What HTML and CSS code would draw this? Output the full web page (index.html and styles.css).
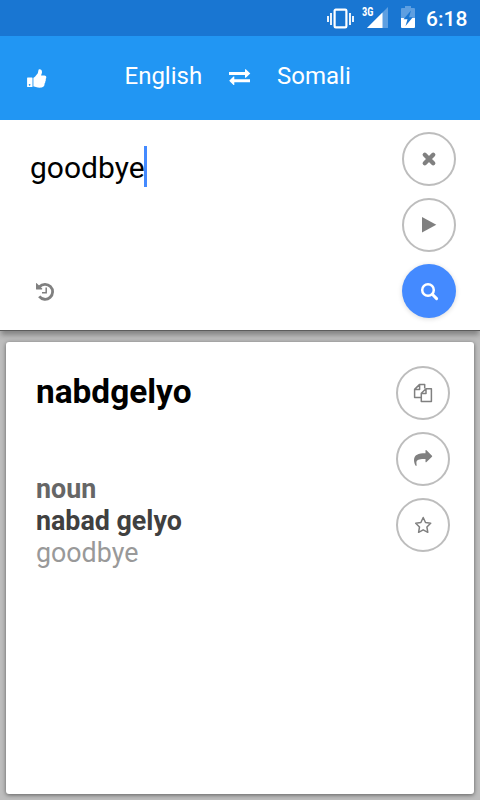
FILE: index.html
```html
<!DOCTYPE html>
<html lang="en">
<head>
    <meta charset="UTF-8">
    <title>Translator</title>
    <link rel="stylesheet" href="styles.css">
</head>
<body>
    <div class="status-bar">
        <svg class="vibrate" width="27" height="21" viewBox="0 0 27 21">
            <path d="M1 8v6M4 5v12M23 5v12M26 8v6" stroke="#fff" stroke-width="1.8"/>
            <rect x="7.6" y="1.6" width="11.8" height="17.8" rx="1.2" fill="none" stroke="#fff" stroke-width="2.2"/>
        </svg>
        <div class="signal">
            <span>3G</span>
            <svg width="21" height="21" viewBox="0 0 21 21">
                <path d="M21 0v21H0z" fill="#5e9fe1"/>
                <path d="M15.5 5.5V21H0z" fill="#fff"/>
            </svg>
        </div>
        <svg class="battery" width="14" height="22" viewBox="0 0 14 22">
            <path d="M0 3q0-1 1-1h3V0h6v2h3q1 0 1 1v9H0z" fill="#5e9fe1"/>
            <path d="M0 12h14v9q0 1-1 1H1q-1 0-1-1z" fill="#fff"/>
            <path d="M10 4.500L2.500 13.200h4L4.500 20l7.300-8.800H8z" fill="#1976d2"/>
        </svg>
        <span class="clock">6:18</span>
    </div>

    <div class="header">
        <svg class="thumb" width="20" height="20" viewBox="0 0 20 20">
            <path fill="#fff" fill-rule="evenodd" d="M.6 8.500H5q.5 0 .5.5v8.600q0 .5-.5.500H.6q-.5 0-.5-.5V9q0-.5.5-.5zM2.600 15a.8.8 0 1 0 .01 0z"/>
            <path fill="#fff" d="M6.400 9q0-.5.5-.6C8 8 8.800 6.600 10 5.200c1.200-1.300 1-2.200 1.400-3.800.2-.8.500-1.100 1.200-1.100 1.600 0 2.400 1.200 2.400 2.700 0 1.400-.6 2.300-.9 3.400h3.400c1 0 1.800.8 1.800 1.800 0 .7-.2 1.300-.6 1.700.3 1 .1 1.800-.4 2.500.1 1-.2 1.800-.8 2.400.2 1.400-.4 3.200-2.700 3.700-2 .3-4.200.1-6-.6l-1.700-.5q-.7 0-.7-.5z"/>
        </svg>
        <span class="lang from">English</span>
        <svg class="swap" width="22" height="16" viewBox="0 0 22 16">
            <path fill="#fff" d="M0 3h16V.2h.8L21.300 4.600 16.800 8.800H16V6H0zM21 10.200v3H5.300V16h-.8L.2 11.700 4.500 7.400h.8v2.800z"/>
        </svg>
        <span class="lang">Somali</span>
    </div>

    <div class="input-area">
        <div class="text-column">
            <div class="query">goodbye<i class="caret"></i></div>
            <svg class="history" width="19" height="19" viewBox="0 0 19 19">
                <path d="M3.500 4.800A7.500 7.500 0 1 1 3.200 14.400" fill="none" stroke="#808080" stroke-width="2.800"/>
                <path d="M0 1.300q.3-.4.7 0L6.200 6.600q.4.900-.5.900H.6q-.6 0-.6-.6z" fill="#808080"/>
                <path d="M10.200 5.500v5.300H6" fill="none" stroke="#808080" stroke-width="1.500"/>
            </svg>
        </div>
        <div class="buttons">
            <div class="round">
                <svg width="20" height="20" viewBox="0 0 20 20">
                    <path d="M5.800 5.800l8.400 8.400M14.200 5.800l-8.400 8.400" stroke="#808080" stroke-width="4.400" stroke-linecap="round"/>
                </svg>
            </div>
            <div class="round">
                <svg width="20" height="20" viewBox="0 0 20 20">
                    <path d="M3 2L17.300 9.800 3 17.600z" fill="#808080"/>
                </svg>
            </div>
            <div class="round search">
                <svg width="20" height="20" viewBox="0 0 20 20">
                    <circle cx="9" cy="9" r="5.800" fill="none" stroke="#fff" stroke-width="2.500"/>
                    <path d="M13.300 13.300l4.300 4.300" stroke="#fff" stroke-width="3" stroke-linecap="round"/>
                </svg>
            </div>
        </div>
    </div>

    <div class="result-area">
        <div class="card">
            <div class="result-text">
                <h1>nabdgelyo</h1>
                <div class="entry">
                    <div class="pos">noun</div>
                    <div class="term">nabad gelyo</div>
                    <div class="meaning">goodbye</div>
                </div>
            </div>
            <div class="buttons">
                <div class="round">
                    <svg width="20" height="20" viewBox="0 0 20 20" fill="none" stroke="#808080" stroke-width="1.500" stroke-linejoin="round">
                        <path d="M8 14.500H1.600V6.400L6.400 1.600h5.300V5.500M6.600 1.700v4.900H1.700"/>
                        <path d="M13 5.700h5.400v12.800H8.300V10.200zM13 5.700v4.700H8.300"/>
                    </svg>
                </div>
                <div class="round">
                    <svg width="20" height="20" viewBox="0 0 20 20">
                        <path d="M12.500 1.300q.4-.6 1-.1L19 6.700q.4.500 0 1L13.500 13q-.6.500-1-.1V10C7 9.800 3.600 10.300 3.400 13.500c0 1.200.2 2 .2 3.100 0 .5-.6.700-.9.200C1.600 15 1 13 1 11 1.200 5.800 5 4.200 12.500 4.200z" fill="#808080"/>
                    </svg>
                </div>
                <div class="round">
                    <svg width="20" height="20" viewBox="0 0 20 20">
                        <path d="M10.200 2.500l2.300 5 5.200.8-3.800 3.700.9 5.300-4.600-2.500-4.600 2.500.9-5.300-3.800-3.700 5.200-.8z" fill="none" stroke="#808080" stroke-width="1.500" stroke-linejoin="round"/>
                    </svg>
                </div>
            </div>
        </div>
    </div>
</body>
</html>
```

FILE: styles.css
```css
* {
    box-sizing: border-box;
}

body {
    margin: 0;
    height: 800px;
    display: flex;
    flex-direction: column;
    overflow: hidden;
    background-color: #bdbdbd;
    font-family: Roboto, sans-serif;
}

svg {
    display: block;
    flex: none;
}

/* Android status bar */
.status-bar {
    height: 36px;
    display: flex;
    align-items: flex-start;
    padding: 7px 12px 0 327px;
    background-color: #1976d2;
    color: white;
}

.vibrate {
    margin-top: 1px;
}

.signal {
    display: flex;
    width: 34px;
    margin-left: 8px;
}

.signal span {
    width: 13px;
    margin-right: -8px;
    font-family: "Roboto Condensed", Roboto, sans-serif;
    font-size: 12px;
    line-height: 11px;
    font-weight: bold;
    transform: scaleX(0.87);
    transform-origin: left;
}

.battery {
    margin: -1px 0 0 5px;
}

.clock {
    margin-left: 11px;
    font-size: 21px;
    line-height: 24px;
    font-weight: 500;
}

.header {
    height: 84px;
    flex: none;
    display: flex;
    align-items: center;
    padding: 0 27px;
    background-color: #2196f3;
    color: white;
}

.thumb {
    margin-top: 2px;
}

.lang {
    font-size: 24px;
    line-height: 28px;
    margin: -4px 0 0 26px;
}

.lang.from {
    width: 78px;
    margin-left: 77.5px;
}

.swap {
    margin: -2px 0 0 26.5px;
}

/* source text */
.input-area {
    height: 211px;
    flex: none;
    display: flex;
    justify-content: space-between;
    padding: 12px 24px 12px 30px;
    border-bottom: 1px solid #5c5c5c;
    background-color: white;
    box-shadow: 0 5px 5px -1px rgba(0, 0, 0, 0.3);
}

.text-column {
    display: flex;
    flex-direction: column;
    justify-content: space-between;
    padding: 14px 0 17px;
}

.query {
    display: flex;
    height: 41px;
    color: black;
    font-size: 30px;
    line-height: 44px;
}

.caret {
    width: 3px;
    margin-left: -1px;
    background-color: #448aff;
}

.history {
    margin-left: 6px;
}

.buttons {
    display: flex;
    flex-direction: column;
    gap: 12px;
}

.round {
    width: 54px;
    height: 54px;
    flex: none;
    display: flex;
    align-items: center;
    justify-content: center;
    border: 2px solid #bdbdbd;
    border-radius: 50%;
}

.round.search {
    border: none;
    background-color: #448aff;
    box-shadow: 0 1px 5px rgba(0, 0, 0, 0.15);
}

/* translation */
.result-area {
    flex: 1;
    padding: 11px 6px 6px;
    display: flex;
}

.card {
    flex: 1;
    display: flex;
    justify-content: space-between;
    padding: 24px 24px 24px 30px;
    border-radius: 3px;
    background-color: white;
    box-shadow: 0 1px 4px rgba(0, 0, 0, 0.5);
}

h1 {
    margin: 6px 0 0;
    color: black;
    font-size: 33.4px;
    line-height: 40px;
}

.entry {
    margin-top: 61px;
    font-size: 26.8px;
    line-height: 32px;
}

.pos {
    color: #666;
    font-weight: bold;
}

.term {
    color: #404040;
    font-weight: bold;
}

.meaning {
    color: #999;
}
```
